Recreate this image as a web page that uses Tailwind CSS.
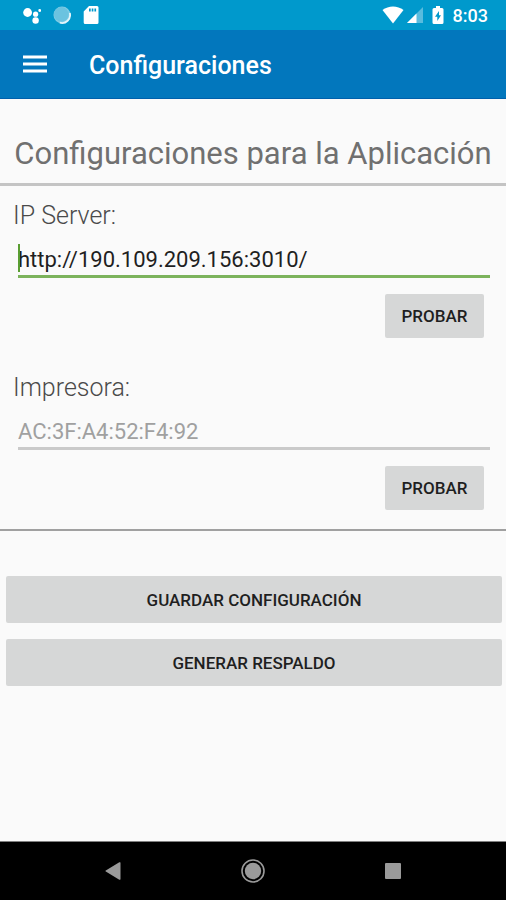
<!DOCTYPE html>
<html lang="es">
<head>
    <meta charset="UTF-8">
    <meta name="viewport" content="width=device-width, initial-scale=1.0">
    <title>Configuraciones</title>
    <script src="https://cdn.jsdelivr.net/npm/@tailwindcss/browser@4"></script>
</head>
<body class="flex min-h-screen flex-col bg-[#fafafa] font-[Roboto,sans-serif] text-[#1f1f1f] antialiased">

    <!-- Status bar -->
    <div class="flex h-[30px] items-center justify-between bg-[#0099cc] pr-[18px] pl-[23px] text-white">
        <div class="flex items-center gap-3">
            <svg class="h-5 w-[18px]" viewBox="0 0 18 20" fill="currentColor">
                <circle cx="4.600" cy="7.500" r="4.400"/>
                <circle cx="12.600" cy="9.200" r="2.600"/>
                <circle cx="16.700" cy="5.500" r="1.400"/>
                <circle cx="12.600" cy="15.500" r="3.200"/>
            </svg>
            <svg class="h-[18px] w-[18px]" viewBox="0 0 18 18">
                <circle cx="9" cy="9" r="8.500" fill="#7fcce5"/>
                <path d="M16.800 7a8 8 0 0 1-10 9.700" fill="none" stroke="#e5f5fa" stroke-width="1.800"/>
                <circle cx="8.300" cy="8.300" r="7.300" fill="#6bc3e0"/>
            </svg>
            <svg class="h-5 w-4" viewBox="0 0 16 20" fill="currentColor">
                <path fill-rule="evenodd" d="M6 1h8a1.500 1.500 0 0 1 1.500 1.500v15A1.500 1.500 0 0 1 14 19H2.200a1.500 1.500 0 0 1-1.500-1.500V6.500zM6 3.500v3h1.700v-3zM8.700 3.500v3h1.700v-3zM11.400 3.500v3h1.700v-3z"/>
            </svg>
        </div>
        <div class="flex items-center">
            <svg class="h-[18px] w-[22px]" viewBox="0 0 22 18" fill="currentColor">
                <path d="M11 17.500 0.500 4C6.500-.7 15.500-.7 21.500 4z"/>
            </svg>
            <svg class="ml-[2px] h-[18px] w-[18px]" viewBox="0 0 18 18" fill="currentColor">
                <path d="M17 1v16H1z" opacity=".35"/>
                <path d="M10.500 7.500V17H1z"/>
            </svg>
            <svg class="ml-2 h-5 w-3" viewBox="0 0 12 20" fill="currentColor">
                <path fill-rule="evenodd" d="M4 1h4v2h2a1.500 1.500 0 0 1 1.500 1.500v13A1.500 1.500 0 0 1 10 19H2A1.500 1.500 0 0 1 .5 17.500v-13A1.500 1.500 0 0 1 2 3h2zM7 6l-4 5.800h2.300V16L9 10.200H7z"/>
            </svg>
            <span class="ml-[9px] pt-[2px] text-[18px] leading-6 font-medium">8:03</span>
        </div>
    </div>

    <!-- App bar -->
    <header class="flex h-[69px] items-center border-b border-[#0060ac] bg-[#0277bd] pl-[23px] text-white">
        <button type="button" aria-label="Abrir menú" class="cursor-pointer">
            <svg class="h-6 w-6" viewBox="0 0 24 24" fill="currentColor">
                <path d="M0 3.500h24v3H0zM0 10.500h24v3H0zM0 17.500h24v3H0z"/>
            </svg>
        </button>
        <span class="ml-[42px] pt-1 text-[25px] leading-8 font-medium">Configuraciones</span>
    </header>

    <main class="flex-1">
        <h1 class="border-b-[3px] border-[#c4c4c4] pt-[35px] pb-[9px] text-center text-[31px] leading-[40px] whitespace-nowrap text-[#707070]">Configuraciones para la Aplicación</h1>

        <form class="pt-4">
            <div class="flex flex-col px-[13px]">
                <label for="ip" class="text-[25px] leading-7 font-light text-[#4a4a4a]">IP Server:</label>
                <div class="relative mx-[5px] mt-2 mr-[3px]">
                    <input id="ip" type="text" value="http://190.109.209.156:3010/" class="h-10 w-full border-b-[3px] border-[#7cb35c] pt-[6px] text-[22px] outline-none">
                    <!-- Caret -->
                    <span class="absolute top-[6px] left-0 h-7 w-[2px] bg-[#5a9e32]"></span>
                </div>
                <button type="button" class="mt-4 mr-[9px] h-[44px] w-[99px] cursor-pointer self-end rounded-[2px] bg-[#d6d7d7] pt-[2px] text-[17px] font-medium">PROBAR</button>
            </div>

            <div class="mt-9 flex flex-col px-[13px]">
                <label for="printer" class="text-[25px] leading-7 font-light text-[#4a4a4a]">Impresora:</label>
                <div class="mx-[5px] mt-2 mr-[3px]">
                    <input id="printer" type="text" placeholder="AC:3F:A4:52:F4:92" class="h-10 w-full border-b-[3px] border-[#cacaca] pt-[6px] text-[22px] outline-none placeholder:text-[#a0a0a0]">
                </div>
                <button type="button" class="mt-4 mr-[9px] h-[44px] w-[99px] cursor-pointer self-end rounded-[2px] bg-[#d6d7d7] pt-[2px] text-[17px] font-medium">PROBAR</button>
            </div>

            <div class="mt-[19px] flex flex-col gap-4 border-t-2 border-[#a0a0a0] pt-[45px] pr-1 pl-[6px]">
                <button type="submit" class="h-[47px] cursor-pointer rounded-[2px] bg-[#d6d7d7] pt-[2px] text-[17px] font-medium">GUARDAR CONFIGURACIÓN</button>
                <button type="button" class="h-[47px] cursor-pointer rounded-[2px] bg-[#d6d7d7] pt-[2px] text-[17px] font-medium">GENERAR RESPALDO</button>
            </div>
        </form>
    </main>

    <!-- Navigation bar -->
    <nav class="flex h-[59px] items-center justify-center gap-[116px] border-t border-[#808080] bg-black text-[#9a9a9a]">
        <button type="button" aria-label="Atrás" class="cursor-pointer">
            <svg class="h-6 w-6" viewBox="0 0 24 24" fill="currentColor">
                <path d="M19.500 4v16a.8.8 0 0 1-1.200.7L4.800 12.600a.7.7 0 0 1 0-1.200L18.300 3.300a.8.8 0 0 1 1.200.7z"/>
            </svg>
        </button>
        <button type="button" aria-label="Inicio" class="cursor-pointer">
            <svg class="h-6 w-6" viewBox="0 0 24 24" fill="currentColor">
                <circle cx="12" cy="12" r="11" fill="none" stroke="currentColor" stroke-width="1.600"/>
                <circle cx="12" cy="12" r="8.200"/>
            </svg>
        </button>
        <button type="button" aria-label="Recientes" class="cursor-pointer">
            <svg class="h-6 w-6" viewBox="0 0 24 24" fill="currentColor">
                <rect x="4" y="4" width="16" height="16" rx="1"/>
            </svg>
        </button>
    </nav>

</body>
</html>
